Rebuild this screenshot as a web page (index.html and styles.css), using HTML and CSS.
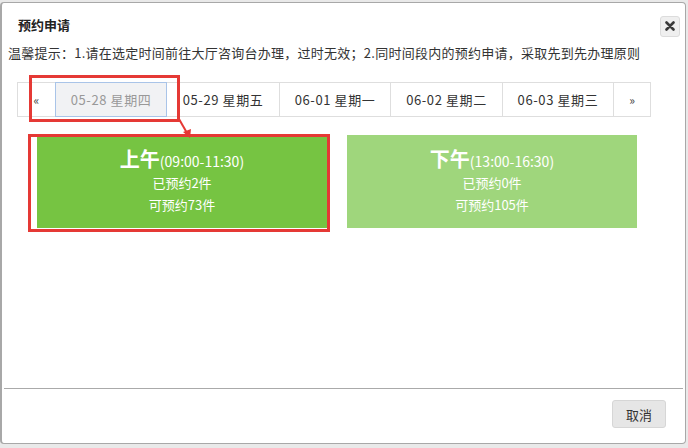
FILE: index.html
```html
<!DOCTYPE html>
<html lang="zh-CN">
<head>
    <meta charset="UTF-8">
    <title>预约申请</title>
    <link rel="stylesheet" href="styles.css">
</head>
<body>
    <div class="dialog">
        <div class="dialog-head">
            <span class="dialog-title">预约申请</span>
            <span class="close">
                <svg width="10" height="10" viewBox="0 0 10 10"><path d="M1.5 1.5 L8.5 8.5 M8.5 1.5 L1.5 8.5" stroke="#3a3a3a" stroke-width="2.6" stroke-linecap="round"/></svg>
            </span>
        </div>
        <div class="dialog-body">
            <p class="tip">温馨提示：1.请在选定时间前往大厅咨询台办理，过时无效；2.同时间段内的预约申请，采取先到先办理原则</p>
            <ul class="pager">
                <li class="arrow">&laquo;</li>
                <li class="active">05-28 星期四</li>
                <li>05-29 星期五</li>
                <li>06-01 星期一</li>
                <li>06-02 星期二</li>
                <li>06-03 星期三</li>
                <li class="arrow">&raquo;</li>
            </ul>
            <div class="slots">
                <div class="slot am">
                    <div class="slot-title"><b>上午</b>(09:00-11:30)</div>
                    <div>已预约2件</div>
                    <div>可预约73件</div>
                </div>
                <div class="slot pm">
                    <div class="slot-title"><b>下午</b>(13:00-16:30)</div>
                    <div>已预约0件</div>
                    <div>可预约105件</div>
                </div>
            </div>
        </div>
        <div class="dialog-foot">
            <button class="btn">取消</button>
        </div>

        <!-- 标注 -->
        <div class="mark mark-date"></div>
        <div class="mark mark-slot"></div>
        <svg class="mark-arrow" width="20" height="22" viewBox="0 0 20 22">
            <path d="M3 1 L11 15" stroke="#e53935" stroke-width="2"/>
            <path d="M7 14 L15 11 L14 20 Z" fill="#e53935"/>
        </svg>
    </div>
</body>
</html>
```

FILE: styles.css
```css
body {
    margin: 0;
    background: #e9e9e9;
    font-family: "Noto Sans CJK SC", "Liberation Sans", sans-serif;
    color: #333;
}
.dialog {
    position: relative;
    box-sizing: border-box;
    width: 686px;
    height: 442px;
    margin-top: 2px;
    background: #fff;
    border: 1px solid #a8a8a8;
    border-left-width: 2px;
    border-radius: 4px;
    display: flex;
    flex-direction: column;
}
.dialog-head {
    display: flex;
    justify-content: space-between;
    align-items: center;
    padding: 8px 5px 0 16px;
    height: 26px;
}
.dialog-title {
    font-size: 13px;
    font-weight: bold;
    color: #222;
}
.close {
    width: 18px;
    height: 19px;
    margin-top: 4px;
    background: #efefef;
    border: 1px solid #dcdcdc;
    border-radius: 3px;
    display: flex;
    align-items: center;
    justify-content: center;
}
.dialog-body {
    flex: 1;
}
.tip {
    margin: 6px 0 0 6px;
    font-size: 13px;
    letter-spacing: 0.25px;
    line-height: 20px;
    color: #333;
}
.pager {
    display: flex;
    list-style: none;
    margin: 19px 0 0 15px;
    padding: 0;
    width: 634px;
    height: 35px;
    box-sizing: border-box;
    border: 1px solid #dedede;
}
.pager li {
    width: 112px;
    box-sizing: border-box;
    border-left: 1px solid #dedede;
    font-size: 13px;
    letter-spacing: 0.6px;
    color: #333;
    display: flex;
    align-items: center;
    justify-content: center;
}
.pager li.arrow {
    width: 37px;
    font-size: 12px;
    letter-spacing: 0;
    color: #444;
}
.pager li:first-child {
    border-left: none;
}
.pager li.active {
    width: 113px;
    margin: -1px 0;
    border: 1px solid #a9c4e8;
    background: #f1f2f4;
    color: #999;
}
.pager li.active + li {
    border-left: none;
}
.slots {
    display: flex;
    gap: 20px;
    margin: 18px 0 0 35px;
}
.slot {
    width: 290px;
    height: 93px;
    color: #fff;
    font-size: 13px;
    line-height: 22px;
    text-align: center;
    padding-top: 13px;
    box-sizing: border-box;
}
.slot.am {
    background: #76c442;
}
.slot.pm {
    background: #9fd67c;
}
.slot-title {
    font-size: 14px;
    line-height: 22px;
}
.slot-title b {
    font-size: 20px;
}
.dialog-foot {
    margin: 0 2px;
    height: 55px;
    border-top: 1px solid #aaa;
    display: flex;
    justify-content: flex-end;
    padding: 11px 17px 0 0;
    box-sizing: border-box;
}
.btn {
    width: 54px;
    height: 28px;
    border: 1px solid #d6d6d6;
    border-radius: 3px;
    background: #e6e6e6;
    font-family: inherit;
    font-size: 13px;
    color: #333;
}
.mark {
    position: absolute;
    border: 3px solid #e53935;
}
.mark-date {
    left: 27px;
    top: 72px;
    width: 145px;
    height: 41px;
}
.mark-slot {
    left: 26px;
    top: 131px;
    width: 296px;
    height: 92px;
}
.mark-arrow {
    position: absolute;
    left: 174px;
    top: 115px;
}
```
